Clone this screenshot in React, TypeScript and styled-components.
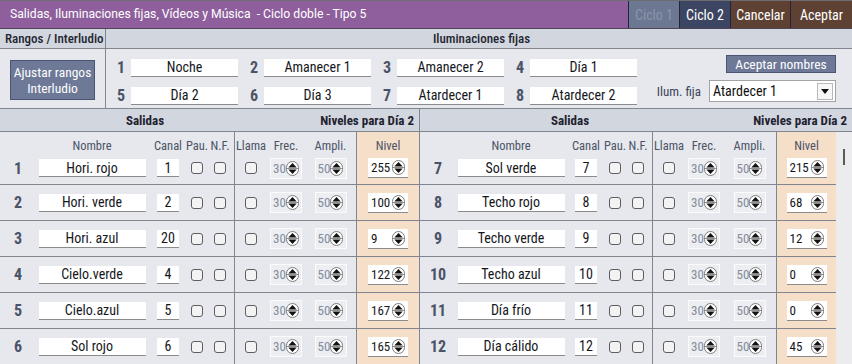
import React from "react";
import styled, { createGlobalStyle } from "styled-components";

const GlobalStyle = createGlobalStyle`
  html, body {
    margin: 0;
    padding: 0;
    background: #ffffff;
  }
  body {
    font-family: "Roboto Condensed", Roboto, "Liberation Sans", sans-serif;
  }
  * {
    box-sizing: border-box;
  }
`;

const line = "#80858f";

const Frame = styled.div`
  width: 852px;
  height: 364px;
  overflow: hidden;
  display: flex;
  flex-direction: column;
  background: #e6e8ed;
`;

const TitleBar = styled.div`
  height: 29px;
  display: flex;
  background: #8e5f9c;
  border-top: 1px solid #6d6d72;
  border-bottom: 1px solid #4e4658;
`;

const Title = styled.div`
  flex: 1;
  padding-left: 10px;
  color: #ffffff;
  font-family: Roboto, "Liberation Sans", sans-serif;
  font-size: 12.2px;
  line-height: 27px;
`;

const TopButton = styled.div<{ $tone: "off" | "on" | "brown"; $w: number }>`
  width: ${(p) => p.$w}px;
  display: flex;
  align-items: center;
  justify-content: center;
  font-size: 14px;
  border-left: 1px solid #23243a;
  background: ${(p) =>
    p.$tone === "off" ? "#6c7791" : p.$tone === "on" ? "#3c4662" : "#5e4133"};
  color: ${(p) => (p.$tone === "off" ? "#8c95aa" : "#ffffff")};
`;

const TopSection = styled.div`
  height: 80px;
  display: grid;
  grid-template-columns: 106px 1fr;
  border-bottom: 1px solid ${line};
`;

const Panel = styled.div<{ $divider?: boolean }>`
  display: flex;
  flex-direction: column;
  border-right: ${(p) => (p.$divider ? `1px solid ${line}` : "none")};
`;

const PanelHead = styled.div<{ $center?: boolean }>`
  height: 20px;
  background: #d2d6df;
  border-bottom: 1px solid ${line};
  font-size: 13px;
  font-weight: 500;
  color: #222631;
  line-height: 19px;
  padding-left: 5px;
  white-space: nowrap;
  text-align: ${(p) => (p.$center ? "center" : "left")};
`;

const RangosBody = styled.div`
  flex: 1;
  display: flex;
  align-items: center;
  justify-content: center;
  padding-top: 3px;
`;

const SlateButton = styled.div<{ $w: number; $h: number }>`
  width: ${(p) => p.$w}px;
  height: ${(p) => p.$h}px;
  background: #6e7997;
  border: 1px solid #4b5571;
  color: #ffffff;
  font-size: 13.5px;
  line-height: 16px;
  display: flex;
  align-items: center;
  justify-content: center;
  text-align: center;
`;

const IlumBody = styled.div`
  flex: 1;
  display: flex;
  padding: 9px 16px 0 11px;
`;

const NamesGrid = styled.div`
  display: grid;
  grid-template-columns: repeat(4, 121px);
  column-gap: 12px;
  row-gap: 9px;
  align-content: start;
`;

const NameCell = styled.div`
  display: flex;
  align-items: center;
`;

const BigNum = styled.span<{ $w?: number }>`
  width: ${(p) => p.$w ?? 14}px;
  font-size: 16px;
  font-weight: 700;
  color: #4b5367;
  text-align: ${(p) => (p.$w ? "center" : "left")};
`;

const TextBox = styled.div<{ $w: number; $h?: number }>`
  width: ${(p) => p.$w}px;
  height: ${(p) => p.$h ?? 18}px;
  background: #ffffff;
  border-bottom: 1px solid #8b8b8b;
  font-size: 14px;
  color: #15171c;
  display: flex;
  align-items: center;
  justify-content: center;
  white-space: nowrap;
`;

const RightControls = styled.div`
  margin-left: auto;
  margin-top: -3px;
  display: flex;
  flex-direction: column;
  align-items: flex-end;
  gap: 7px;
`;

const SelectRow = styled.div`
  display: flex;
  align-items: center;
  gap: 8px;
  font-size: 13px;
  color: #3c4456;
`;

const Select = styled.div`
  width: 127px;
  height: 22px;
  background: #ffffff;
  border: 1px solid #a3a3a3;
  display: flex;
  align-items: center;
  padding-left: 3px;
  font-size: 14px;
  color: #111111;
`;

const SelectArrow = styled.div`
  margin-left: auto;
  margin-right: 2px;
  width: 16px;
  height: 17px;
  border: 1px solid #b8b8b8;
  background: #f7f7f7;
  display: flex;
  align-items: center;
  justify-content: center;
`;

const TableHead = styled.div`
  height: 23px;
  display: grid;
  grid-template-columns: 420px 1fr;
  background: #d2d6df;
  border-bottom: 1px solid ${line};
`;

const HeadCell = styled.div<{ $divider?: boolean; $salW: number }>`
  display: flex;
  align-items: center;
  font-size: 13px;
  font-weight: 700;
  color: #1f2330;
  border-right: ${(p) => (p.$divider ? `1px solid ${line}` : "none")};
  padding-right: 5px;
  & > span:first-child {
    width: ${(p) => p.$salW}px;
    text-align: center;
  }
  & > span:last-child {
    margin-left: auto;
  }
`;

const TableBody = styled.div`
  flex: 1;
  display: flex;
`;

const Side = styled.div<{ $w: number; $divider?: boolean }>`
  width: ${(p) => p.$w}px;
  border-right: ${(p) => (p.$divider ? `1px solid ${line}` : "none")};
  display: flex;
  flex-direction: column;
`;

const Row = styled.div<{ $cols: string; $h: number; $top?: boolean }>`
  height: ${(p) => p.$h}px;
  display: grid;
  grid-template-columns: ${(p) => p.$cols};
  border-top: ${(p) => (p.$top ? `1px solid ${line}` : "none")};
`;

const Cell = styled.div<{ $divider?: boolean; $peach?: boolean; $end?: boolean }>`
  display: flex;
  align-items: ${(p) => (p.$end ? "flex-start" : "center")};
  justify-content: center;
  border-left: ${(p) => (p.$divider ? `1px solid ${line}` : "none")};
  background: ${(p) => (p.$peach ? "#f5dfc8" : "transparent")};
`;

const ColLabel = styled.span`
  font-size: 12.5px;
  color: #4b5367;
  padding-top: 6px;
  white-space: nowrap;
`;

const Check = styled.div`
  width: 12px;
  height: 12px;
  border: 1px solid #5e5e62;
  border-radius: 3px;
  background: #f3f3f4;
`;

const Spin = styled.div<{ $disabled?: boolean }>`
  width: ${(p) => (p.$disabled ? 32 : 40)}px;
  height: ${(p) => (p.$disabled ? 21 : 20)}px;
  background: ${(p) => (p.$disabled ? "#eceef2" : "#ffffff")};
  border: ${(p) => (p.$disabled ? "1px solid #fafbfc" : "none")};
  border-bottom: 1px solid ${(p) => (p.$disabled ? "#fafbfc" : "#8b8b8b")};
  display: flex;
  align-items: center;
  justify-content: space-between;
  padding: 0 3px 0 ${(p) => (p.$disabled ? 2 : 3)}px;
  font-size: 13px;
  color: ${(p) => (p.$disabled ? "#858c9b" : "#15171c")};
  & > svg {
    flex-shrink: 0;
  }
`;

const ScrollTrack = styled.div`
  flex: 1;
  background: #ececee;
  position: relative;
`;

const ScrollThumb = styled.div`
  position: absolute;
  left: 7px;
  top: 17px;
  width: 2px;
  height: 16px;
  background: #5a5a5a;
`;

const SpinIcon: React.FC = () => (
  <svg width="13" height="15" viewBox="0 0 13 15">
    <rect x="0.5" y="0.5" width="12" height="14" rx="6" fill="#ffffff" stroke="#7d7d7d" />
    <line x1="1" y1="7.5" x2="12" y2="7.5" stroke="#8f8f8f" />
    <path d="M2.3 6.4 L6.5 2 L10.7 6.4 Z" fill="#111111" />
    <path d="M2.3 8.6 L6.5 13 L10.7 8.6 Z" fill="#111111" />
  </svg>
);

type Output = { n: number; name: string; canal: number; nivel: number };

const leftOutputs: Output[] = [
  { n: 1, name: "Hori. rojo", canal: 1, nivel: 255 },
  { n: 2, name: "Hori. verde", canal: 2, nivel: 100 },
  { n: 3, name: "Hori. azul", canal: 20, nivel: 9 },
  { n: 4, name: "Cielo.verde", canal: 4, nivel: 122 },
  { n: 5, name: "Cielo.azul", canal: 5, nivel: 167 },
  { n: 6, name: "Sol rojo", canal: 6, nivel: 165 },
];

const rightOutputs: Output[] = [
  { n: 7, name: "Sol verde", canal: 7, nivel: 215 },
  { n: 8, name: "Techo rojo", canal: 8, nivel: 68 },
  { n: 9, name: "Techo verde", canal: 9, nivel: 12 },
  { n: 10, name: "Techo azul", canal: 10, nivel: 0 },
  { n: 11, name: "Día frío", canal: 11, nivel: 0 },
  { n: 12, name: "Día cálido", canal: 12, nivel: 45 },
];

const ilumNames = [
  "Noche",
  "Amanecer 1",
  "Amanecer 2",
  "Día 1",
  "Día 2",
  "Día 3",
  "Atardecer 1",
  "Atardecer 2",
];

const leftCols = "36px 112px 40px 18px 28px 33px 38px 51px 63px";
const rightCols = "36px 110px 40px 18px 28px 33px 38px 53px 60px";

const headers = ["", "Nombre", "Canal", "Pau.", "N.F.", "Llama", "Frec.", "Ampli.", "Nivel"];

const OutputTable: React.FC<{ rows: Output[]; cols: string }> = ({ rows, cols }) => (
  <>
    <Row $cols={cols} $h={20}>
      {headers.map((h, i) => (
        <Cell key={i} $end $divider={i === 5 || i === 8} $peach={i === 8}>
          <ColLabel>{h}</ColLabel>
        </Cell>
      ))}
    </Row>
    {rows.map((r, i) => (
      <Row key={r.n} $cols={cols} $h={i === 0 ? 32 : 36} $top={i > 0}>
        <Cell>
          <BigNum $w={36}>{r.n}</BigNum>
        </Cell>
        <Cell>
          <TextBox $w={107}>{r.name}</TextBox>
        </Cell>
        <Cell>
          <TextBox $w={22}>{r.canal}</TextBox>
        </Cell>
        <Cell>
          <Check />
        </Cell>
        <Cell>
          <Check />
        </Cell>
        <Cell $divider>
          <Check />
        </Cell>
        <Cell>
          <Spin $disabled>
            30
            <SpinIcon />
          </Spin>
        </Cell>
        <Cell>
          <Spin $disabled>
            50
            <SpinIcon />
          </Spin>
        </Cell>
        <Cell $divider $peach>
          <Spin>
            {r.nivel}
            <SpinIcon />
          </Spin>
        </Cell>
      </Row>
    ))}
  </>
);

export default function App() {
  return (
    <>
      <GlobalStyle />
      <Frame>
        <TitleBar>
          <Title>Salidas, Iluminaciones fijas, Vídeos y Música&nbsp; - Ciclo doble - Tipo 5</Title>
          <TopButton $tone="off" $w={51}>Ciclo 1</TopButton>
          <TopButton $tone="on" $w={51}>Ciclo 2</TopButton>
          <TopButton $tone="brown" $w={60}>Cancelar</TopButton>
          <TopButton $tone="brown" $w={62}>Aceptar</TopButton>
        </TitleBar>

        <TopSection>
          <Panel $divider>
            <PanelHead>Rangos / Interludio</PanelHead>
            <RangosBody>
              <SlateButton $w={85} $h={40}>
                Ajustar rangos
                <br />
                Interludio
              </SlateButton>
            </RangosBody>
          </Panel>
          <Panel>
            <PanelHead $center>Iluminaciones fijas</PanelHead>
            <IlumBody>
              <NamesGrid>
                {ilumNames.map((name, i) => (
                  <NameCell key={name}>
                    <BigNum>{i + 1}</BigNum>
                    <TextBox $w={107}>{name}</TextBox>
                  </NameCell>
                ))}
              </NamesGrid>
              <RightControls>
                <SlateButton $w={110} $h={18}>Aceptar nombres</SlateButton>
                <SelectRow>
                  Ilum. fija
                  <Select>
                    Atardecer 1
                    <SelectArrow>
                      <svg width="8" height="5" viewBox="0 0 8 5">
                        <path d="M0 0 L8 0 L4 5 Z" fill="#111111" />
                      </svg>
                    </SelectArrow>
                  </Select>
                </SelectRow>
              </RightControls>
            </IlumBody>
          </Panel>
        </TopSection>

        <TableHead>
          <HeadCell $divider $salW={290}>
            <span>Salidas</span>
            <span>Niveles para Día 2</span>
          </HeadCell>
          <HeadCell $salW={300}>
            <span>Salidas</span>
            <span>Niveles para Día 2</span>
          </HeadCell>
        </TableHead>

        <TableBody>
          <Side $w={420} $divider>
            <OutputTable rows={leftOutputs} cols={leftCols} />
          </Side>
          <Side $w={416}>
            <OutputTable rows={rightOutputs} cols={rightCols} />
          </Side>
          <ScrollTrack>
            <ScrollThumb />
          </ScrollTrack>
        </TableBody>
      </Frame>
    </>
  );
}
